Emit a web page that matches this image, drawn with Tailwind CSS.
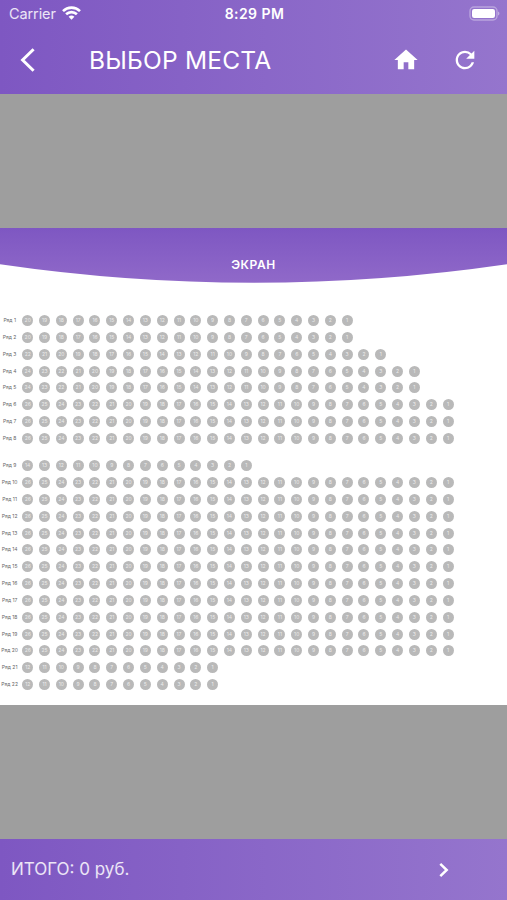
<!DOCTYPE html>
<html lang="ru">
<head>
  <meta charset="UTF-8">
  <title>Выбор места</title>
  <script src="https://cdn.jsdelivr.net/npm/@tailwindcss/browser@4"></script>
  <meta name="viewport" content="width=device-width, initial-scale=1.0">
  <style>
    body {
      font-family: Inter, Roboto, sans-serif;
    }
  </style>
</head>
<body class="h-[900px] w-[507px] overflow-hidden bg-[#9e9e9e] flex flex-col">

  <!-- Header -->
  <header class="h-[94px] shrink-0 bg-linear-to-r from-[#7e57c2] to-[#9575cd] text-white">
    <div class="grid grid-cols-3 items-center h-[27px] pl-[9px] pr-[7px]">
      <div class="flex items-center gap-[6px] text-[14.5px] tracking-[-0.1px] text-white/85">
        <span>Carrier</span>
        <svg class="w-[19px] h-[14px] -mt-[2px] text-white" viewBox="0 0 19 14" fill="none" stroke="currentColor" stroke-width="2.6">
          <path d="M1 5.1a12.2 12.2 0 0 1 17 0"/>
          <path d="M4.1 8.3a7.7 7.7 0 0 1 10.8 0"/>
          <path d="M9.5 13.8l-2.9-3a4.2 4.2 0 0 1 5.8 0z" fill="currentColor" stroke="none"/>
        </svg>
      </div>
      <span class="text-center text-[14px] font-semibold tracking-[0.45px] whitespace-nowrap">8:29 PM</span>
      <svg class="justify-self-end w-[31px] h-[15px]" viewBox="0 0 31 15">
        <rect x="1" y="1" width="27" height="13" rx="4" fill="none" stroke="#fff" stroke-opacity=".35" stroke-width="1.4"/>
        <rect x="3" y="3" width="23" height="9" rx="2.2" fill="#fff"/>
        <path d="M29.2 5.4c1.6.7 1.6 3.5 0 4.2z" fill="#fff" fill-opacity=".5"/>
      </svg>
    </div>
    <div class="flex items-center h-[65px] pl-[18px] pr-[28px]">
      <button class="w-[20px]" aria-label="Назад">
        <svg class="w-[20px] h-[26px]" viewBox="0 0 20 26" fill="none" stroke="#fff" stroke-width="3">
          <path d="M15.6 2.2L4.6 13l11 10.8"/>
        </svg>
      </button>
      <h1 class="ml-[51px] text-[24.5px] leading-[30px] tracking-[0.2px] whitespace-nowrap">ВЫБОР МЕСТА</h1>
      <button class="ml-auto" aria-label="Домой">
        <svg class="w-[28px] h-[28px]" viewBox="0 0 24 24" fill="#fff"><path d="M10 20v-6h4v6h5v-8h3L12 3 2 12h3v8z"/></svg>
      </button>
      <button class="ml-[31px]" aria-label="Обновить">
        <svg class="w-[28px] h-[28px]" viewBox="0 0 24 24" fill="#fff"><path d="M17.65 6.35A7.958 7.958 0 0 0 12 4c-4.42 0-7.99 3.58-7.99 8s3.57 8 7.99 8c3.73 0 6.84-2.55 7.73-6h-2.08A5.99 5.99 0 0 1 12 18c-3.31 0-6-2.69-6-6s2.69-6 6-6c1.66 0 3.14.69 4.22 1.78L13 11h7V4l-2.35 2.35z"/></svg>
      </button>
    </div>
  </header>

  <!-- Hall -->
  <main class="mt-[134px] h-[476.5px] shrink-0 bg-white">
    <div class="grid h-[55px]">
      <svg class="col-start-1 row-start-1 w-[507px] h-[55px]" viewBox="0 0 507 55">
        <defs>
          <linearGradient id="screen" x1="0" y1="0" x2="0" y2="1">
            <stop offset="0" stop-color="#7e57c2"/>
            <stop offset="1" stop-color="#9069c9"/>
          </linearGradient>
        </defs>
        <path d="M0 0H507V36.2Q253.5 73.2 0 36.2z" fill="url(#screen)"/>
      </svg>
      <span class="col-start-1 row-start-1 self-start justify-self-center mt-[29px] text-[12px] leading-[16px] font-semibold tracking-[0.6px] text-white">ЭКРАН</span>
    </div>
    <div id="seats" class="pt-[29.3px]"></div>
  </main>

  <!-- Total -->
  <footer class="mt-auto h-[61px] shrink-0 flex items-center justify-between pl-[11px] pr-[57px] bg-linear-to-r from-[#7e57c2] to-[#9575cd]">
    <span class="text-[17px] text-white/85">ИТОГО: 0 руб.</span>
    <svg class="w-[12px] h-[16px]" viewBox="0 0 12 16" fill="none" stroke="#fff" stroke-width="2.5"><path d="M2.3 1.8L8.7 8l-6.4 6.2"/></svg>
  </footer>

<script>
const rows = [20, 20, 22, 24, 24, 26, 26, 26, 14, 26, 26, 26, 26, 26, 26, 26, 26, 26, 26, 26, 12, 12];
const seats = document.getElementById('seats');

rows.forEach((count, i) => {
  const row = document.createElement('div');
  row.className = 'flex items-center h-[16.82px]';
  // aisle between rows 8 and 9
  if (i === 8) row.classList.add('mt-[10.7px]');

  let html = `<span class="w-[19.3px] shrink-0 text-center text-[5px] leading-none text-[#666] whitespace-nowrap">Ряд ${i + 1}</span>`;
  for (let n = count; n > 0; n--) {
    html += `<span class="w-[16.82px] shrink-0 flex justify-center"><span class="w-[11px] h-[11px] rounded-full bg-[#b9b9b9] text-[#ececec] text-[5px] leading-[11px] text-center">${n}</span></span>`;
  }
  row.innerHTML = html;
  seats.appendChild(row);
});
</script>

</body>
</html>
